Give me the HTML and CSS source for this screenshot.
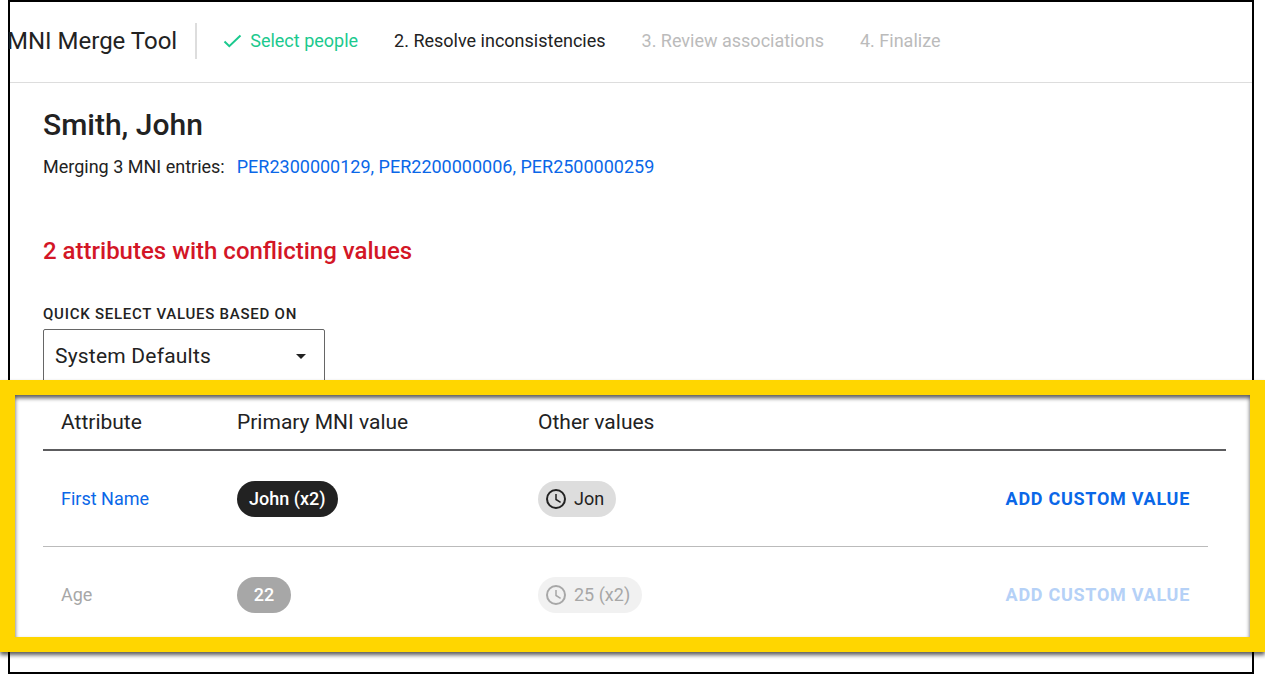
FILE: index.html
```html
<!DOCTYPE html>
<html lang="en">
<head>
    <meta charset="UTF-8">
    <meta name="viewport" content="width=device-width, initial-scale=1.0">
    <title>MNI Merge Tool</title>
    <link rel="stylesheet" href="styles.css">
</head>
<body>
    <div class="window">
        <header class="topbar">
            <h1 class="app-title">MNI Merge Tool</h1>
            <ol class="steps">
                <li class="step done">
                    <svg class="check" viewBox="0 0 18 18" aria-hidden="true">
                        <path d="M1 9.5 L5.8 14.2 L17 3.5" fill="none" stroke="currentColor" stroke-width="2"/>
                    </svg>
                    Select people
                </li>
                <li class="step current">2. Resolve inconsistencies</li>
                <li class="step">3. Review associations</li>
                <li class="step">4. Finalize</li>
            </ol>
        </header>

        <main class="content">
            <h2 class="person-name">Smith, John</h2>
            <p class="merging">
                <span>Merging 3 MNI entries:</span>
                <span class="entries"><a href="#">PER2300000129,</a> <a href="#">PER2200000006,</a> <a href="#">PER2500000259</a></span>
            </p>

            <h3 class="conflict-title">2 attributes with conflicting values</h3>

            <div class="quick-select">
                <label for="quick-values">QUICK SELECT VALUES BASED ON</label>
                <div class="select-box">
                    <select id="quick-values">
                        <option>System Defaults</option>
                    </select>
                    <svg class="caret" viewBox="0 0 10 5" aria-hidden="true">
                        <path d="M0 0 H10 L5 5 Z" fill="currentColor"/>
                    </svg>
                </div>
            </div>

            <table class="attributes">
                <thead>
                    <tr>
                        <th class="col-attribute">Attribute</th>
                        <th class="col-primary">Primary MNI value</th>
                        <th>Other values</th>
                        <th></th>
                        <th class="col-gutter"></th>
                    </tr>
                </thead>
                <tbody>
                    <tr>
                        <td><a href="#">First Name</a></td>
                        <td><button type="button" class="chip selected">John (x2)</button></td>
                        <td>
                            <button type="button" class="chip with-icon">
                                <svg class="clock" viewBox="0 0 20 20" aria-hidden="true">
                                    <circle cx="10" cy="10" r="9" fill="none" stroke="currentColor" stroke-width="2"/>
                                    <path d="M10 5 V10.5 L14.6 13.3" fill="none" stroke="currentColor" stroke-width="1.5"/>
                                </svg>
                                Jon
                            </button>
                        </td>
                        <td class="action"><button type="button" class="add-value">ADD CUSTOM VALUE</button></td>
                        <td class="col-gutter"></td>
                    </tr>
                    <tr class="disabled">
                        <td>Age</td>
                        <td><button type="button" class="chip selected" disabled>22</button></td>
                        <td>
                            <button type="button" class="chip with-icon" disabled>
                                <svg class="clock" viewBox="0 0 20 20" aria-hidden="true">
                                    <circle cx="10" cy="10" r="9" fill="none" stroke="currentColor" stroke-width="2"/>
                                    <path d="M10 5 V10.5 L14.6 13.3" fill="none" stroke="currentColor" stroke-width="1.5"/>
                                </svg>
                                25 (x2)
                            </button>
                        </td>
                        <td class="action"><button type="button" class="add-value" disabled>ADD CUSTOM VALUE</button></td>
                        <td class="col-gutter"></td>
                    </tr>
                </tbody>
            </table>
        </main>
        <div class="highlight"></div>
    </div>
</body>
</html>
```

FILE: styles.css
```css
* {
    box-sizing: border-box;
}

body {
    margin: 0;
    background-color: #fff;
    color: #222;
    font-family: Roboto, "Liberation Sans", sans-serif;
    font-size: 18px;
    line-height: 24px;
}

h1, h2, h3, p, ol {
    margin: 0;
    padding: 0;
}

a {
    color: #0a67e8;
    text-decoration: none;
}

button, select {
    font-family: inherit;
    color: inherit;
}

.window {
    position: relative;
    margin: 0 11px 0 8px;
    border: 2px solid #000;
}

/* Header with the wizard steps */
.topbar {
    display: flex;
    align-items: center;
    height: 81px;
    padding-bottom: 2px;
    border-bottom: 1px solid #ddd;
}

.app-title {
    margin-left: -3px;
    padding-right: 18px;
    border-right: 2px solid #ddd;
    font-size: 24px;
    font-weight: 400;
    line-height: 36px;
    white-space: nowrap;
}

.steps {
    display: flex;
    gap: 36px;
    margin-left: 26px;
    list-style: none;
    white-space: nowrap;
}

.step {
    display: flex;
    align-items: center;
    gap: 8px;
    color: #bbb;
}

.step.done {
    color: #1bc98e;
}

.step.current {
    color: #222;
}

.check {
    width: 19px;
    height: 18px;
}

/* Page content */
.content {
    padding: 24px 26px 29px 33px;
}

.person-name {
    font-size: 30px;
    font-weight: 500;
    line-height: 36px;
}

.merging {
    display: flex;
    gap: 12px;
    margin-top: 12px;
}

.conflict-title {
    margin-top: 54px;
    color: #d31626;
    font-size: 24px;
    font-weight: 500;
    line-height: 36px;
}

.quick-select {
    display: flex;
    flex-direction: column;
    width: 282px;
    margin-top: 36px;
}

.quick-select label {
    padding-bottom: 6px;
    font-size: 15px;
    font-weight: 500;
    line-height: 18px;
    letter-spacing: 0.05em;
}

.select-box {
    position: relative;
}

.quick-select select {
    width: 100%;
    height: 54px;
    padding: 0 36px 0 11px;
    border: 1px solid #666;
    border-radius: 2px;
    background-color: #fff;
    font-size: 21px;
    letter-spacing: 0.01em;
    appearance: none;
}

.caret {
    position: absolute;
    top: 25px;
    right: 19px;
    width: 10px;
    height: 5px;
    pointer-events: none;
}

/* Conflicting attributes */
.attributes {
    width: 100%;
    margin-top: 12px;
    border-collapse: separate;
    border-spacing: 0;
    table-layout: fixed;
}

.attributes th {
    height: 56px;
    padding: 0 18px;
    border-bottom: 2px solid #5c5c5e;
    font-size: 21px;
    font-weight: 400;
    text-align: left;
    white-space: nowrap;
}

.attributes td {
    height: 96px;
    padding: 0 18px;
    border-bottom: 1px solid #bbb;
}

.attributes tr:last-child td,
.attributes td.col-gutter {
    border-bottom-color: transparent;
}

.col-attribute {
    width: 176px;
}

.col-primary {
    width: 301px;
}

.attributes .col-gutter {
    width: 18px;
    padding: 0;
}

.attributes .action {
    text-align: right;
}

.chip {
    display: inline-flex;
    align-items: center;
    justify-content: center;
    gap: 8px;
    min-width: 54px;
    height: 36px;
    padding: 0 12px;
    border: none;
    border-radius: 18px;
    background-color: #ddd;
    font-size: 18px;
    vertical-align: middle;
    cursor: pointer;
}

.chip.with-icon {
    padding-left: 8px;
}

.chip.selected {
    background-color: #222;
    color: #fff;
    font-weight: 500;
}

.clock {
    width: 20px;
    height: 20px;
}

.add-value {
    padding: 0;
    border: none;
    background: none;
    color: #0a67e8;
    font-size: 18px;
    font-weight: 700;
    letter-spacing: 0.04em;
    cursor: pointer;
}

.disabled td {
    color: #a7a7a7;
}

.disabled .chip {
    background-color: #f1f1f1;
}

.disabled .chip.selected {
    background-color: #a7a7a7;
}

.disabled .add-value {
    color: #b5d1f7;
}

/* Callout drawn over the table */
.highlight {
    position: absolute;
    right: -13px;
    bottom: 20px;
    left: -10px;
    height: 272px;
    border: 15px solid #ffd600;
    filter: drop-shadow(0 3px 2px rgba(0, 0, 0, 0.65));
    pointer-events: none;
}
```
